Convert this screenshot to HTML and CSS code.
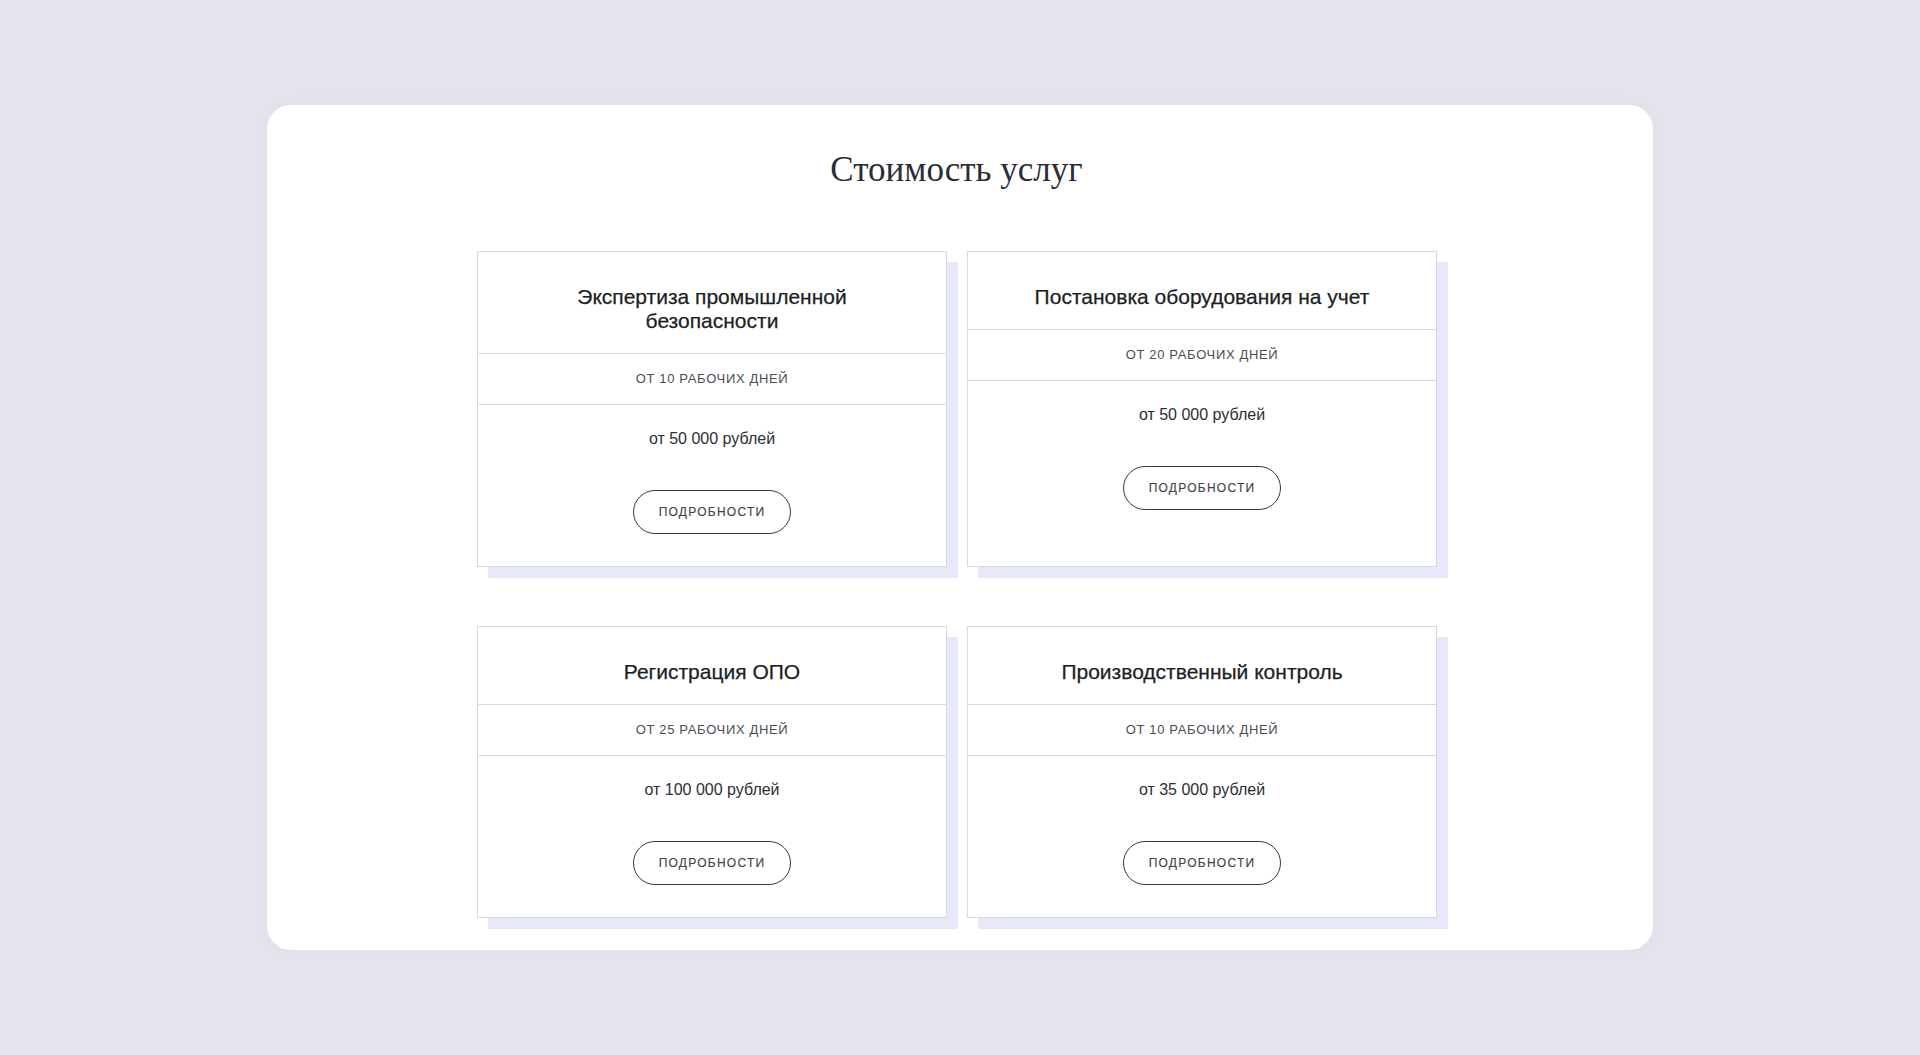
FILE: index.html
```html
<!DOCTYPE html>
<html lang="ru">
<head>
    <meta charset="UTF-8">
    <title>Стоимость услуг</title>
    <link rel="stylesheet" href="styles.css">
</head>
<body>
<div class="wrap">
    <div class="panel">
        <h2 class="panel-title">Стоимость услуг</h2>
        <div class="prices">
            <div class="card">
                <div class="card-title">Экспертиза промышленной безопасности</div>
                <div class="card-term">от 10 рабочих дней</div>
                <div class="card-body">
                    <div class="card-price">от 50 000 рублей</div>
                    <a class="btn" href="#">подробности</a>
                </div>
            </div>
            <div class="card">
                <div class="card-title">Постановка оборудования на учет</div>
                <div class="card-term">от 20 рабочих дней</div>
                <div class="card-body">
                    <div class="card-price">от 50 000 рублей</div>
                    <a class="btn" href="#">подробности</a>
                </div>
            </div>
            <div class="card">
                <div class="card-title">Регистрация ОПО</div>
                <div class="card-term">от 25 рабочих дней</div>
                <div class="card-body">
                    <div class="card-price">от 100 000 рублей</div>
                    <a class="btn" href="#">подробности</a>
                </div>
            </div>
            <div class="card">
                <div class="card-title">Производственный контроль</div>
                <div class="card-term">от 10 рабочих дней</div>
                <div class="card-body">
                    <div class="card-price">от 35 000 рублей</div>
                    <a class="btn" href="#">подробности</a>
                </div>
            </div>
        </div>
    </div>
</div>
</body>
</html>
```

FILE: styles.css
```css
*{
    margin: 0;
    padding: 0;
    box-sizing: border-box;
}
html,
body{
    height: 100%;
}
body{
    background: #e6e5ee;
    font-family: "Liberation Sans", Arial, sans-serif;
    color: #222;
}
a{
    text-decoration: none;
}
.wrap{
    padding: 105px 0 0 267px;
}
.panel{
    width: 1386px;
    height: 845px;
    background: #fff;
    border-radius: 24px;
    padding-top: 46px;
    box-shadow: 0 0 30px rgba(60, 60, 110, 0.04);
}
.panel-title{
    font-family: "Liberation Serif", "Times New Roman", serif;
    font-weight: normal;
    font-size: 35px;
    line-height: 38px;
    color: #2a2e36;
    text-align: center;
    padding-right: 7px;
}
.prices{
    width: 960px;
    margin: 62px 0 0 210px;
    display: grid;
    grid-template-columns: 470px 470px;
    column-gap: 20px;
    row-gap: 59px;
}
.card{
    border: 1px solid #d6d8e7;
    background: #fff;
    box-shadow: 11px 11px 0 #e7e9fa;
    text-align: center;
}
.card-title{
    padding: 33px 45px 20px;
    font-size: 21px;
    line-height: 24px;
    color: #1b1f25;
    -webkit-text-stroke: 0.25px #1b1f25;
    border-bottom: 1px solid #d6d8e7;
}
.card-term{
    padding: 17px 20px;
    font-size: 13px;
    line-height: 16px;
    letter-spacing: 0.65px;
    text-transform: uppercase;
    color: #4a4d55;
    border-bottom: 1px solid #d6d8e7;
}
.card-body{
    padding: 24px 20px 32px;
}
.card-price{
    font-size: 16px;
    line-height: 20px;
    color: #2b2e33;
}
.btn{
    display: inline-block;
    margin-top: 41px;
    width: 158px;
    height: 44px;
    line-height: 42px;
    border: 1px solid #3a3a3a;
    border-radius: 22px;
    font-size: 12px;
    letter-spacing: 1.25px;
    text-transform: uppercase;
    color: #3f424a;
    -webkit-text-stroke: 0.15px #3f424a;
}
```
